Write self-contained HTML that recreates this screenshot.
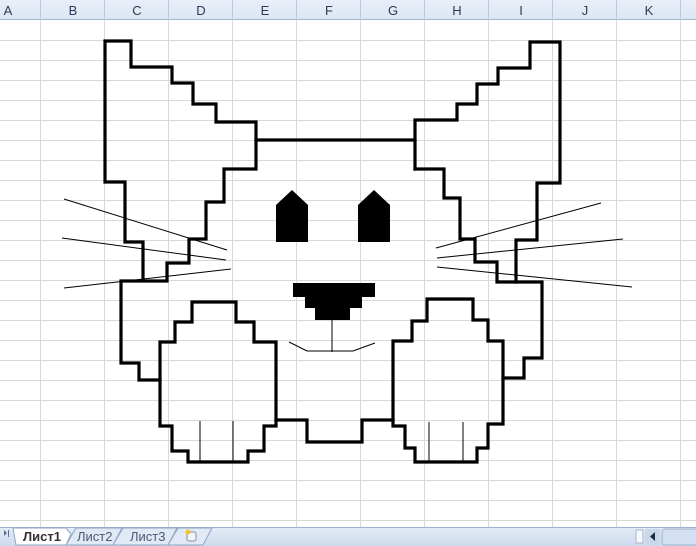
<!DOCTYPE html>
<html><head><meta charset="utf-8"><style>
html,body{margin:0;padding:0;width:696px;height:546px;overflow:hidden;background:#fff}
svg{display:block}
text{font-family:"Liberation Sans",sans-serif}
</style></head><body>
<svg width="696" height="546" viewBox="0 0 696 546" xmlns="http://www.w3.org/2000/svg">
<defs>
<linearGradient id="hd" x1="0" y1="0" x2="0" y2="1"><stop offset="0" stop-color="#e9eff8"/><stop offset="1" stop-color="#dbe5f2"/></linearGradient>
<linearGradient id="tb" x1="0" y1="0" x2="0" y2="1"><stop offset="0" stop-color="#e4ecf7"/><stop offset="1" stop-color="#cddbee"/></linearGradient>
</defs>
<!-- grid -->
<g stroke="#d8d8d8" stroke-width="1">
<path d="M0 40.5H696M0 60.5H696M0 80.5H696M0 100.5H696M0 120.5H696M0 140.5H696M0 160.5H696M0 180.5H696M0 200.5H696M0 220.5H696M0 240.5H696M0 260.5H696M0 280.5H696M0 300.5H696M0 320.5H696M0 340.5H696M0 360.5H696M0 380.5H696M0 400.5H696M0 420.5H696M0 440.5H696M0 460.5H696M0 480.5H696M0 500.5H696M0 520.5H696"/>
<path d="M40.5 20V527M104.5 20V527M168.5 20V527M232.5 20V527M296.5 20V527M360.5 20V527M424.5 20V527M488.5 20V527M552.5 20V527M616.5 20V527M680.5 20V527"/>
</g>
<!-- header -->
<rect x="0" y="0" width="696" height="20" fill="url(#hd)"/>
<path d="M0 19.5H696" stroke="#9eb6ce"/>
<g stroke="#b8cbe0"><path d="M40.5 0V20M104.5 0V20M168.5 0V20M232.5 0V20M296.5 0V20M360.5 0V20M424.5 0V20M488.5 0V20M552.5 0V20M616.5 0V20M680.5 0V20"/></g>
<g font-size="13" fill="#2b3b55" text-anchor="middle">
<text x="8" y="15">A</text><text x="73" y="15">B</text><text x="137" y="15">C</text><text x="201" y="15">D</text><text x="265" y="15">E</text><text x="329" y="15">F</text><text x="393" y="15">G</text><text x="457" y="15">H</text><text x="521" y="15">I</text><text x="585" y="15">J</text><text x="649" y="15">K</text>
</g>
<!-- whiskers -->
<g stroke="#000" stroke-width="1" fill="none">
<path d="M64 199L227 250M62 238L226 260M64 288L231 269"/>
<path d="M436 248L601 203M437 258L623 239M437 267L632 287"/>
<path d="M289 342L307 351L353 351L375 343M332 320V352"/>
<path d="M200 421V462M233 421V462M429 422V462M463 422V462"/>
</g>
<!-- outline -->
<g stroke="#000" stroke-width="3.2" fill="none" stroke-linejoin="miter" stroke-linecap="square">
<path d="M143 281L143 242L125 242L125 182L105 182L105 41L131 41L131 67L172 67L172 83L193 83L193 104L216 104L216 122L256 122L256 169L224 169L224 202L206 202L206 239L189 239L189 263L167 263L167 281L121 281L121 363L139 363L139 380L160 380"/>
<path d="M256 140L415 140"/>
<path d="M415 169L415 120L457 120L457 104L477 104L477 84L498 84L498 68L530 68L530 42L560 42L560 183L537 183L537 240L516 240L516 282L542 282L542 358L524 358L524 378L503 378"/>
<path d="M415 169L444 169L444 198L460 198L460 239L475 239L475 262L497 262L497 282L516 282"/>
<path d="M160 426L160 342L175 342L175 322L192 322L192 302L236 302L236 322L254 322L254 342L276 342L276 426L264 426L264 451L248 451L248 462L188 462L188 451L172 451L172 426Z"/>
<path d="M276 420L307 420L307 442L362 442L362 420L393 420"/>
<path d="M393 426L393 341L412 341L412 321L427 321L427 299L473 299L473 320L488 320L488 341L503 341L503 424L488 424L488 448L477 448L477 462L415 462L415 448L405 448L405 426Z"/>
</g>
<!-- eyes -->
<path d="M276 205L292 190L308 205L308 242L276 242Z" fill="#000"/>
<path d="M358 205L374 190L390 205L390 242L358 242Z" fill="#000"/>
<!-- nose -->
<path d="M293 283H375V297H362V308H350V320H315V308H305V297H293Z" fill="#000"/>
<!-- tab bar -->
<rect x="0" y="527" width="696" height="19" fill="url(#tb)"/>
<path d="M0 527.5H696" stroke="#9db3cf"/>
<path d="M4 530L7 533L4 536Z" fill="#5a6f8d"/><path d="M8.5 530V537" stroke="#5a6f8d"/>
<path d="M13 528H66L71 534L66 545H16Z" fill="#fff" stroke="#8fa7c6"/>
<path d="M66 545L76 528H122L113 545Z" fill="#e0e9f5" stroke="#8fa7c6"/>
<path d="M113 545L123 528H177L168 545Z" fill="#e0e9f5" stroke="#8fa7c6"/>
<path d="M168 545L178 528H212L203 545Z" fill="#e0e9f5" stroke="#8fa7c6"/>
<g font-size="13" fill="#333"><text x="23" y="541" font-weight="bold">Лист1</text><text x="77" y="541" fill="#4a5a75">Лист2</text><text x="130" y="541" fill="#4a5a75">Лист3</text></g>
<rect x="187" y="532" width="9" height="9" rx="2" fill="#f4f4f4" stroke="#7f8fa6"/>
<circle cx="188" cy="532" r="2.5" fill="#f2c230"/>
<rect x="636" y="530" width="7" height="13" fill="#f6f8fb" stroke="#a7b7cc"/>
<rect x="645" y="529" width="15" height="16" fill="#c9d7ea"/>
<path d="M650 536.5L655 532V541Z" fill="#1f2d44"/>
<rect x="662" y="529" width="40" height="16" rx="3" fill="#d3e0f1" stroke="#9fb4cf"/>
</svg>
</body></html>
